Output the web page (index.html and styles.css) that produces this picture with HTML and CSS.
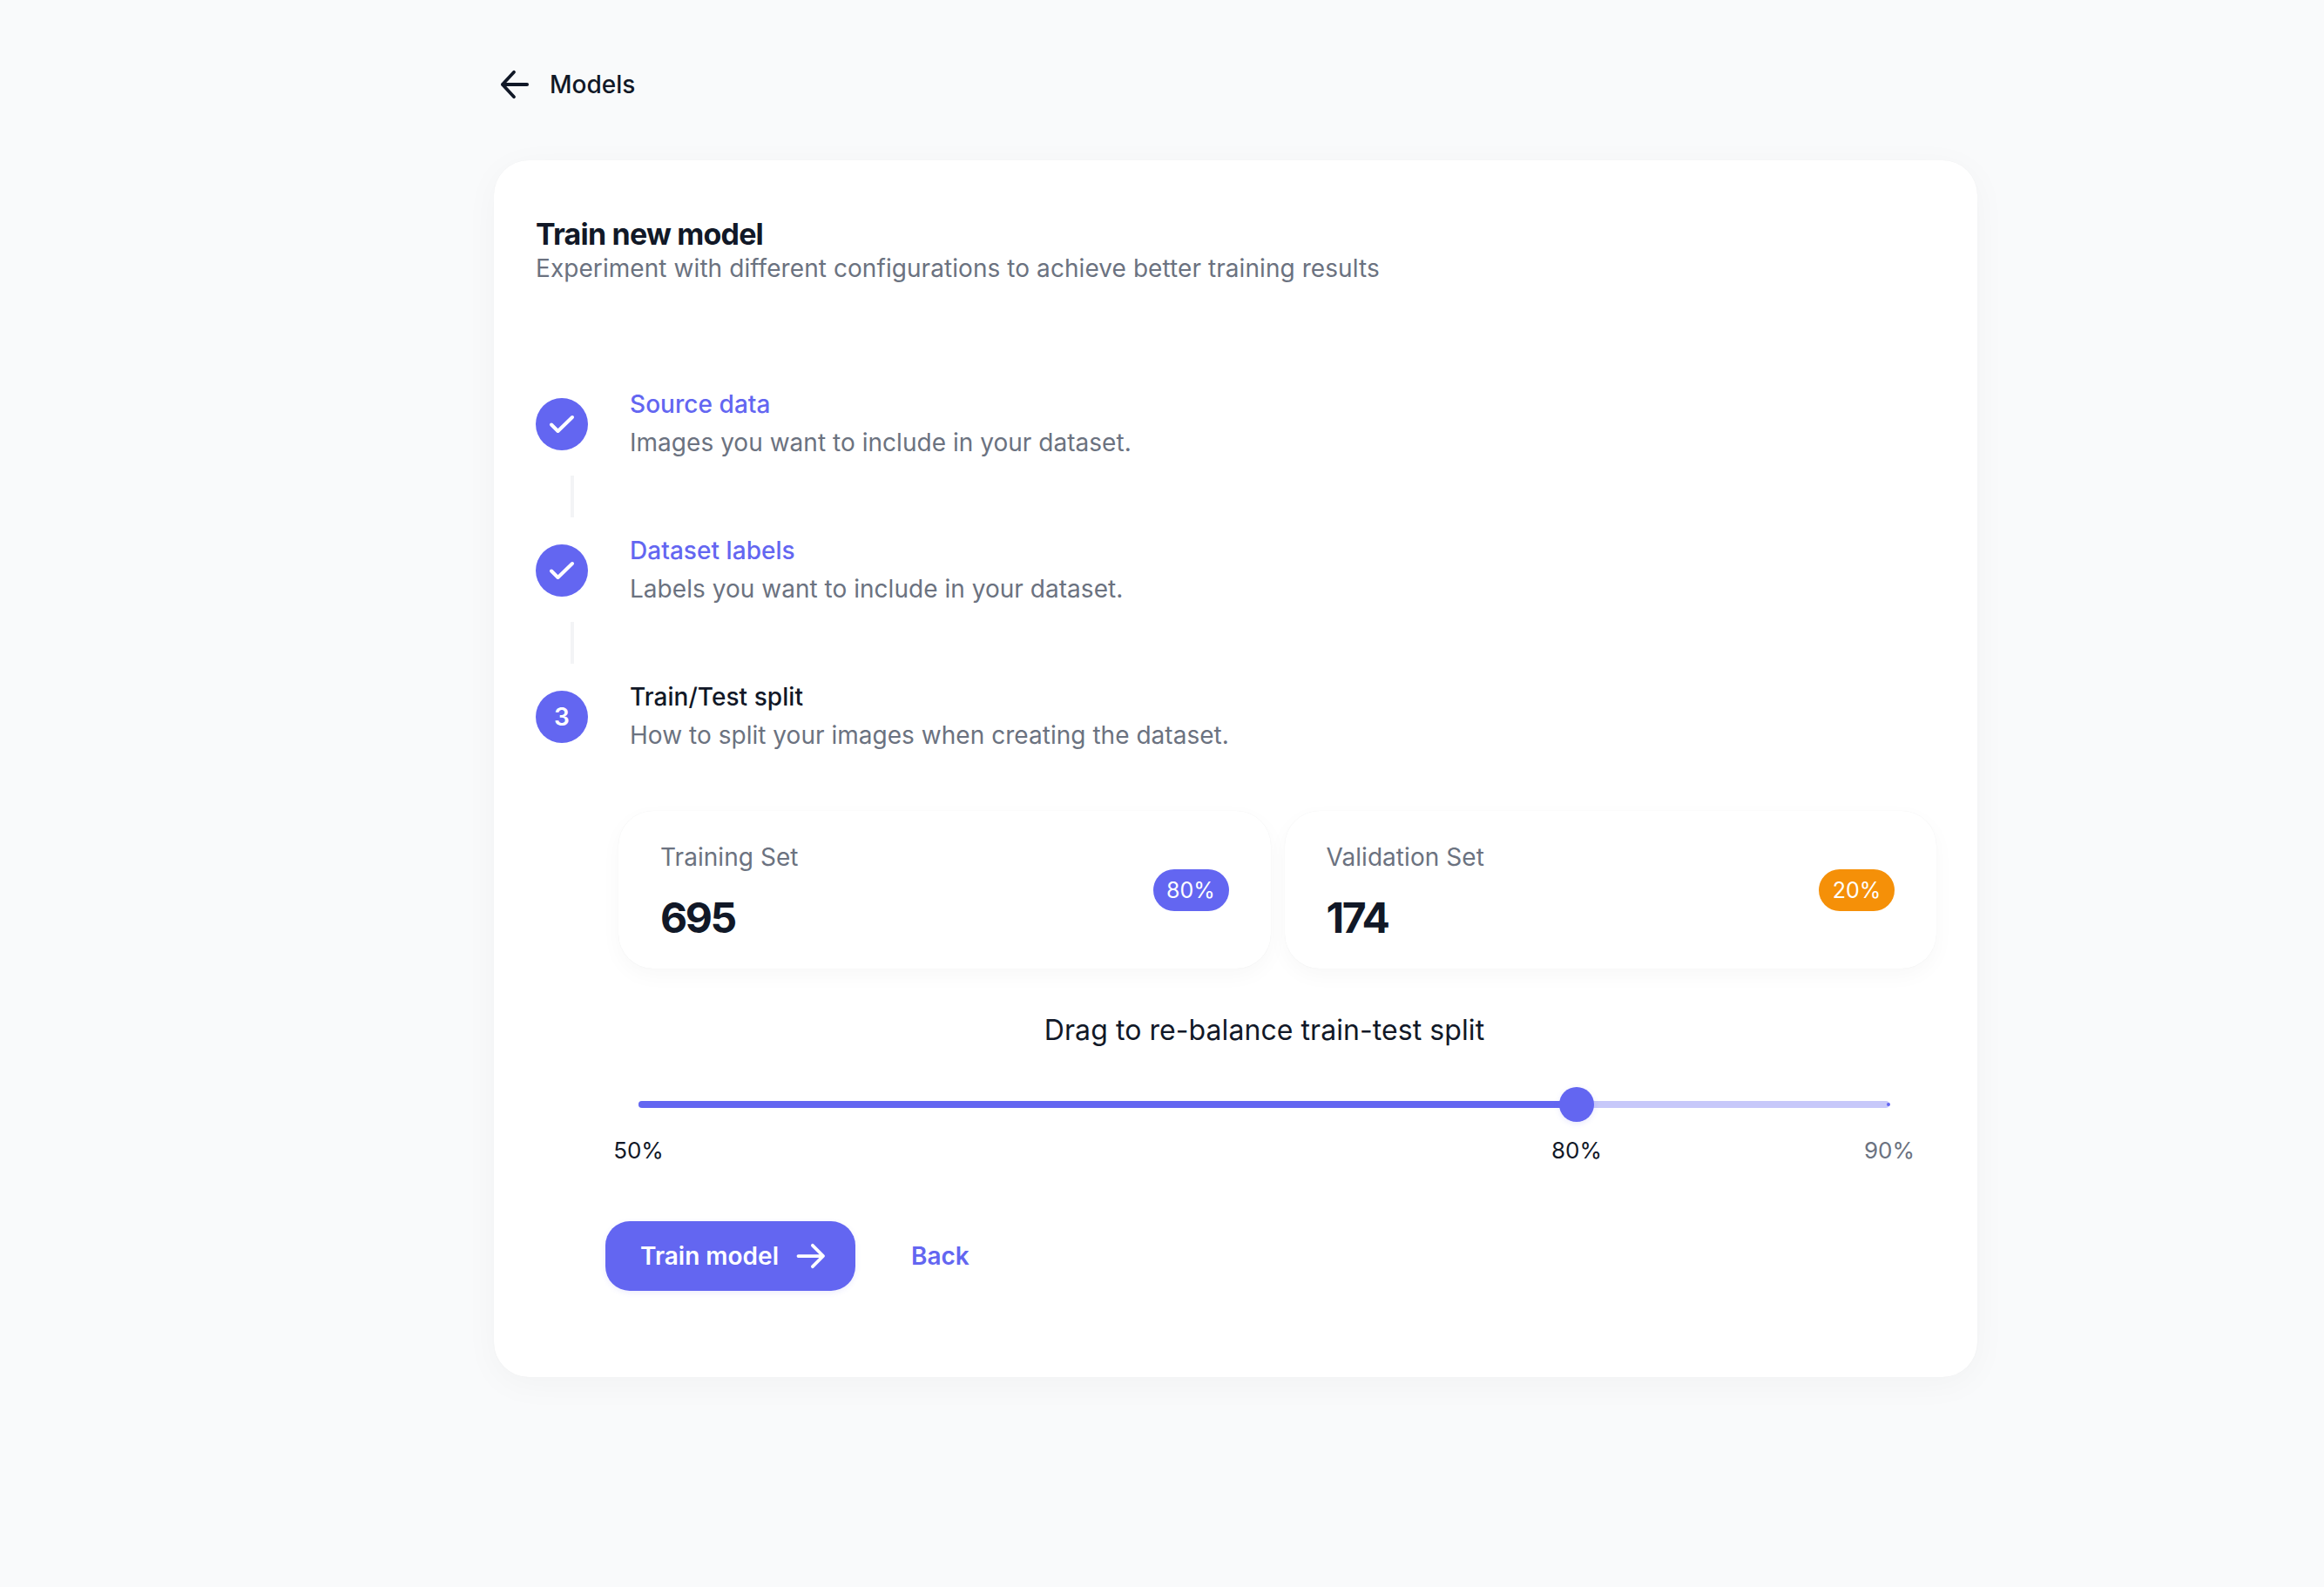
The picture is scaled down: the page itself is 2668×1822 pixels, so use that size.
FILE: index.html
```html
<!DOCTYPE html>
<html lang="en">
<head>
<meta charset="utf-8">
<title>Train new model</title>
<link rel="stylesheet" href="styles.css">
</head>
<body>
<main class="page">
  <a class="crumb" href="#">
    <svg class="crumb-icon" viewBox="0 0 36 36" fill="none" stroke="#111827" stroke-width="4" stroke-linecap="round" stroke-linejoin="round"><path d="M33 18H3M17 3 3 18l14 15"/></svg>
    <span>Models</span>
  </a>
  <section class="card">
    <header class="head">
      <h1 class="title">Train new model</h1>
      <p class="subtitle">Experiment with different configurations to achieve better training results</p>
    </header>
    <ol class="steps">
      <li class="step">
        <span class="dot"><svg class="check" viewBox="0 0 30 24" fill="none" stroke="#fff" stroke-width="4" stroke-linecap="round" stroke-linejoin="round"><path d="M3 12.5 10.5 20 27 4"/></svg></span>
        <div class="step-text"><div class="step-name done">Source data</div><div class="step-desc">Images you want to include in your dataset.</div></div>
      </li>
      <li class="line"></li>
      <li class="step">
        <span class="dot"><svg class="check" viewBox="0 0 30 24" fill="none" stroke="#fff" stroke-width="4" stroke-linecap="round" stroke-linejoin="round"><path d="M3 12.5 10.5 20 27 4"/></svg></span>
        <div class="step-text"><div class="step-name done">Dataset labels</div><div class="step-desc">Labels you want to include in your dataset.</div></div>
      </li>
      <li class="line"></li>
      <li class="step">
        <span class="dot">3</span>
        <div class="step-text"><div class="step-name">Train/Test split</div><div class="step-desc">How to split your images when creating the dataset.</div></div>
      </li>
    </ol>
    <div class="stats">
      <div class="stat">
        <div class="stat-copy"><div class="stat-label">Training Set</div><div class="stat-value">695</div></div>
        <span class="badge badge-indigo">80%</span>
      </div>
      <div class="stat">
        <div class="stat-copy"><div class="stat-label">Validation Set</div><div class="stat-value">174</div></div>
        <span class="badge badge-orange">20%</span>
      </div>
    </div>
    <div class="split">
      <p class="split-title">Drag to re-balance train-test split</p>
      <div class="track">
        <div class="track-fill"></div>
        <span class="track-end"></span>
        <span class="thumb"></span>
        <span class="tick tick-min">50%</span>
        <span class="tick tick-now">80%</span>
        <span class="tick tick-max">90%</span>
      </div>
    </div>
    <div class="actions">
      <button class="primary" type="button">Train model
        <svg class="btn-icon" viewBox="0 0 36 32" fill="none" stroke="#fff" stroke-width="4" stroke-linecap="round" stroke-linejoin="round"><path d="M2.5 16h30M20 3l13 13-13 13"/></svg>
      </button>
      <button class="ghost" type="button">Back</button>
    </div>
  </section>
</main>
</body>
</html>
```
FILE: styles.css
```css
* { box-sizing: border-box; }
html, body { margin: 0; height: 100%; }
body {
  background: #f9fafb;
  color: #111827;
  font-family: Inter, "Liberation Sans", sans-serif;
  overflow: hidden;
}
.page { width: 1703px; margin-left: 567px; padding-top: 74px; }
.crumb {
  display: flex;
  align-items: center;
  gap: 23px;
  height: 46px;
  padding-left: 7px;
  color: #111827;
  font-size: 28px;
  font-weight: 500;
  text-decoration: none;
}
.crumb-icon { width: 34px; height: 34px; }
.card {
  margin-top: 64px;
  height: 1397px;
  padding: 64px 47px 0 48px;
  background: #fff;
  border-radius: 40px;
  box-shadow: 0 0 1px rgba(17, 24, 39, .06), 0 8px 40px rgba(17, 24, 39, .035);
}
.title {
  margin: 0;
  font-size: 34px;
  line-height: 42px;
  font-weight: 700;
  letter-spacing: -.8px;
}
.subtitle {
  margin: 0;
  font-size: 28px;
  line-height: 36px;
  letter-spacing: .07px;
  color: #6b7280;
}
.steps { list-style: none; margin: 114px 0 0; padding: 0; }
.step { display: flex; align-items: center; height: 92px; }
.dot {
  display: flex;
  align-items: center;
  justify-content: center;
  flex: none;
  width: 60px;
  height: 60px;
  margin: 2px 48px 0 0;
  border-radius: 50%;
  background: #6366f1;
  color: #fff;
  font-size: 28px;
  font-weight: 600;
}
.check { width: 30px; height: 24px; }
.step-name { font-size: 28px; line-height: 44px; font-weight: 500; letter-spacing: .05px; }
.step-name.done { color: #6366f1; }
.step-desc { font-size: 28px; line-height: 44px; letter-spacing: .03px; color: #6b7280; }
.line {
  width: 4px;
  height: 48px;
  margin: 14px 0 14px 40px;
  background: #f3f4f6;
}
.stats {
  display: grid;
  grid-template-columns: 1fr 1fr;
  gap: 16px;
  margin: 63px 0 0 95px;
}
.stat {
  display: flex;
  align-items: center;
  justify-content: space-between;
  height: 181px;
  padding: 0 48px;
  background: #fff;
  border-radius: 40px;
  box-shadow: 0 0 1px rgba(17, 24, 39, .08), 0 8px 24px rgba(17, 24, 39, .03);
}
.stat-copy { padding-top: 2px; }
.stat-label { font-size: 28px; line-height: 40px; letter-spacing: .05px; color: #6b7280; }
.stat-value { margin-top: 22px; font-size: 48px; line-height: 56px; font-weight: 700; letter-spacing: -2.4px; }
.badge {
  display: flex;
  align-items: center;
  justify-content: center;
  width: 87px;
  height: 48px;
  border-radius: 24px;
  color: #fff;
  font-size: 25px;
  font-weight: 400;
}
.badge-indigo { background: #6366f1; }
.badge-orange { background: #f59008; }
.split { margin: 51px 0 0 65px; }
.split-title { margin: 0; text-align: center; font-size: 32px; line-height: 40px; letter-spacing: .07px; }
.track {
  position: relative;
  height: 8px;
  margin: 61px 54px 0 53px;
  background: #c7c8fa;
  border-radius: 4px;
}
.track-fill { width: 75%; height: 100%; background: #6366f1; border-radius: 4px 0 0 4px; }
.track-end {
  position: absolute;
  right: -1px;
  top: 2px;
  width: 4px;
  height: 4px;
  border-radius: 50%;
  background: #6366f1;
}
.thumb {
  position: absolute;
  left: 75%;
  top: 50%;
  width: 40px;
  height: 40px;
  margin: -20px 0 0 -20px;
  border-radius: 50%;
  background: #6366f1;
  box-shadow: 0 2px 6px rgba(99, 102, 241, .15);
}
.tick {
  position: absolute;
  top: 39px;
  transform: translateX(-50%);
  font-size: 26px;
  line-height: 36px;
}
.tick-min { left: 0; }
.tick-now { left: 75%; }
.tick-max { left: 100%; color: #6b7280; }
.actions { display: flex; align-items: center; gap: 64px; margin: 130px 0 0 80px; }
.primary {
  display: flex;
  align-items: center;
  gap: 20px;
  width: 287px;
  height: 80px;
  padding: 0 0 0 40px;
  border: 0;
  border-radius: 28px;
  background: #6366f1;
  color: #fff;
  font: 600 28px Inter, "Liberation Sans", sans-serif;
  box-shadow: 0 2px 6px rgba(99, 102, 241, .12);
}
.btn-icon { width: 34px; height: 30px; }
.ghost {
  padding: 0;
  border: 0;
  background: none;
  color: #6366f1;
  font: 600 28px Inter, "Liberation Sans", sans-serif;
}
```
